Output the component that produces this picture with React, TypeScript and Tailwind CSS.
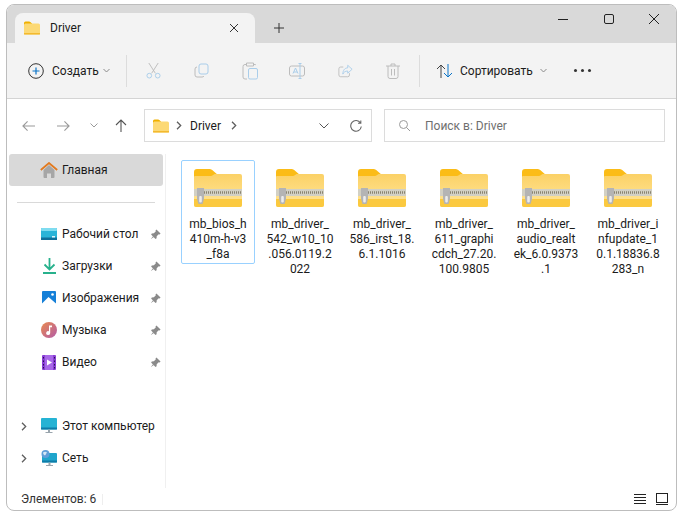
import React from 'react';

const FOLDERS = [
  { lines: ['mb_bios_h', '410m-h-v3', '_f8a'], selected: true },
  { lines: ['mb_driver_', '542_w10_10', '.056.0119.2', '022'] },
  { lines: ['mb_driver_', '586_irst_18.', '6.1.1016'] },
  { lines: ['mb_driver_', '611_graphi', 'cdch_27.20.', '100.9805'] },
  { lines: ['mb_driver_', 'audio_realt', 'ek_6.0.9373', '.1'] },
  { lines: ['mb_driver_i', 'nfupdate_1', '0.1.18836.8', '283_n'] },
];

const SmallFolder = () => (
  <svg width="16" height="14" viewBox="0 0 16 14" className="shrink-0">
    <path d="M0 2a1.500 1.500 0 0 1 1.500-1.500h3.600c.5 0 .9.2 1.200.5L8 2.500V6H0z" fill="#f0b000" />
    <path d="M0 4a1.500 1.500 0 0 1 1.500-1.500h13A1.500 1.500 0 0 1 16 4v8.500a1 1 0 0 1-1 1H1a1 1 0 0 1-1-1z" fill="#fcd975" />
    <rect x="0" y="12" width="16" height="1.500" fill="#f3b92f" />
  </svg>
);

const ZipFolder = () => (
  <svg width="48" height="38" viewBox="0 0 48 38" className="shrink-0">
    <defs>
      <linearGradient id="zipBody" x1="0" y1="0" x2="0" y2="1">
        <stop offset="0" stopColor="#fbd166" />
        <stop offset="0.7" stopColor="#ffe08a" />
        <stop offset="1" stopColor="#ffe08a" />
      </linearGradient>
    </defs>
    <path d="M0 3a3 3 0 0 1 3-3h12c1.500 0 2.800.5 3.800 1.500L24 6v6H0z" fill="#fbbc17" />
    <path d="M0 8a1 1 0 0 1 1-1h15c1.500 0 2.500-.4 3.500-1.200L20.500 5H46a2 2 0 0 1 2 2v29a2 2 0 0 1-2 2H2a2 2 0 0 1-2-2z" fill="url(#zipBody)" />
    <path d="M0 30h48v6a2 2 0 0 1-2 2H2a2 2 0 0 1-2-2z" fill="#fbc93f" />
    <rect x="0" y="20" width="48" height="7" fill="#d2d0c4" />
    <path d="M6 23.500h42" stroke="#8a8470" strokeWidth="2.500" strokeDasharray="1 1" />
    <path d="M3 19h7v11l-1.500 5h-4L3 30z" fill="#b4b4b4" />
    <rect x="5.200" y="27" width="2.600" height="6.500" rx="1" fill="#ececec" />
  </svg>
);

const Pin = () => (
  <svg width="11" height="11" viewBox="0 0 12 12" className="shrink-0 text-[#8a8a8a]">
    <path d="M7 .5 11.500 5 10.500 6 9.500 5.600 7.300 7.800 7.200 10 6 10.800 1.200 6 2 4.800 4.200 4.700 6.400 2.500 6 1.500z M3.200 8 .8 11.200 4 8.800z" fill="currentColor" />
  </svg>
);

const Chevron = () => (
  <svg width="6" height="9" viewBox="0 0 6 9" fill="none" stroke="#5f5f5f" strokeWidth="1.300" className="shrink-0">
    <path d="M1 .8l3.700 3.700L1 8.200" />
  </svg>
);

const SideItem = ({ icon, label, pin, chevron }: { icon: React.ReactNode; label: string; pin?: boolean; chevron?: boolean }) => (
  <div className="flex h-8 items-center">
    <div className="flex w-[34px] justify-center">{chevron && <Chevron />}</div>
    <div className="flex w-4 justify-center">{icon}</div>
    <span className="ml-[5px] w-[88px] whitespace-nowrap">{label}</span>
    {pin && <Pin />}
  </div>
);

const Desktop = (
  <svg width="16" height="13" viewBox="0 0 16 13">
    <rect width="16" height="12" rx="1" fill="#2ab4d8" />
    <rect width="16" height="3" rx="1" fill="#7fdcf0" />
    <rect y="9.500" width="16" height="2.500" fill="#0f6f9a" />
    <rect x="11" y="8" width="3" height="1.500" fill="#e0f4fa" />
  </svg>
);
const Downloads = (
  <svg width="13" height="16" viewBox="0 0 13 16" fill="none" stroke="#27b18c" strokeWidth="1.800">
    <path d="M6.500 0v11M1.500 6.500l5 5 5-5M0 15h13" />
  </svg>
);
const Pictures = (
  <svg width="14" height="15" viewBox="0 0 14 15">
    <rect width="14" height="15" rx="1" fill="#1680d8" />
    <path d="M0 12.500 6.500 6l7.500 6.500V15H0z" fill="#ffffff" />
    <circle cx="10.500" cy="3.500" r="1.300" fill="#ffffff" />
  </svg>
);
const Music = (
  <svg width="16" height="16" viewBox="0 0 16 16">
    <defs>
      <linearGradient id="musicGrad" x1="0" y1="0" x2="1" y2="1">
        <stop offset="0" stopColor="#e98a4e" />
        <stop offset="1" stopColor="#b45ca8" />
      </linearGradient>
    </defs>
    <circle cx="8" cy="8" r="8" fill="url(#musicGrad)" />
    <path d="M8 3.500h3v1.800H9.200V11a2 2 0 1 1-1.200-1.800z" fill="#ffffff" />
  </svg>
);
const Video = (
  <svg width="14" height="15" viewBox="0 0 14 15">
    <rect width="14" height="15" rx="1" fill="#8a3fd6" />
    <rect x="3" y="0" width="8" height="15" fill="#a868e8" />
    <path d="M5 4.500l5 3-5 3z" fill="#ffffff" />
    <path d="M1 2h1v1.500H1zM1 5.500h1V7H1zM1 9h1v1.500H1zM1 12h1v1.500H1zM12 2h1v1.500h-1zM12 5.500h1V7h-1zM12 9h1v1.500h-1zM12 12h1v1.500h-1z" fill="#2a1055" />
  </svg>
);
const Computer = (
  <svg width="16" height="16" viewBox="0 0 16 16">
    <rect width="16" height="11.500" rx="1" fill="#25b3d4" />
    <rect y="9.500" width="16" height="2" fill="#0e7ca8" />
    <path d="M7 11.500h2V14H7zM4.500 14h7v1h-7z" fill="#9aa5ad" />
  </svg>
);
const Network = (
  <svg width="16" height="16" viewBox="0 0 16 16">
    <rect x="1" y="3" width="15" height="9.500" rx="1" fill="#1fa5cc" />
    <rect x="1" y="10.500" width="15" height="2" fill="#0e7ca8" />
    <path d="M7.500 12.500h2V15h-2zM5 15h7v1H5z" fill="#9aa5ad" />
    <circle cx="4.500" cy="4" r="4" fill="#5f9ed8" />
    <path d="M2 2.500c1.500-1 3-1 4 0-1 1-1 2-2 3-1-.5-2-1.500-2-3z" fill="#d5e6f5" />
  </svg>
);

const Home = (
  <svg width="18" height="16" viewBox="0 0 18 16" className="shrink-0">
    <path d="M3.500 8 9 3l5.500 5v7a1 1 0 0 1-1 1H11v-4.500H7V16H4.500a1 1 0 0 1-1-1z" fill="#a6a6a6" />
    <path d="M.8 8 9 1l8.200 7" fill="none" stroke="#e27a1f" strokeWidth="1.800" />
  </svg>
);

export default function App() {
  return (
    <div className="h-[517px] w-[684px] overflow-hidden bg-white pl-[6px] pt-1 text-xs text-[#1b1b1b] [font-family:Roboto,sans-serif]">
      <div className="flex h-[507px] w-[671px] flex-col overflow-hidden rounded-lg border border-[#bdbdbd] bg-white">
        {/* tab strip */}
        <div className="flex h-[38px] shrink-0 items-end bg-[#d9d9d9] pl-2">
          <div className="flex h-[30px] w-[240px] items-center rounded-t-lg bg-[#f3f3f3] pl-[9px]">
            <SmallFolder />
            <span className="ml-[10px]">Driver</span>
            <svg width="10" height="10" viewBox="0 0 10 10" className="ml-auto mr-4" fill="none" stroke="#333" strokeWidth="1">
              <path d="M1 1l8 8M9 1l-8 8" />
            </svg>
          </div>
          <svg width="10" height="10" viewBox="0 0 10 10" className="mb-[10px] ml-[19px]" fill="none" stroke="#333" strokeWidth="1">
            <path d="M5 0v10M0 5h10" />
          </svg>
          <div className="mb-[19px] ml-auto flex items-center">
            <div className="h-px w-[10px] bg-[#222]" />
            <div className="ml-9 h-[10px] w-[10px] rounded-[2px] border border-[#222]" />
            <svg width="10" height="10" viewBox="0 0 10 10" className="ml-[35px] mr-[17px]" fill="none" stroke="#222" strokeWidth="1">
              <path d="M0 0l10 10M10 0L0 10" />
            </svg>
          </div>
        </div>

        {/* toolbar */}
        <div className="flex h-[56px] shrink-0 items-center border-b border-[#d4d4d4] bg-[#f3f3f3] pl-[21px]">
          <svg width="16" height="16" viewBox="0 0 16 16" fill="none">
            <circle cx="8" cy="8" r="7.300" stroke="#333" />
            <path d="M8 4.500v7M4.500 8h7" stroke="#0a74c8" strokeWidth="1.200" />
          </svg>
          <span className="ml-2 w-[44px] whitespace-nowrap">Создать</span>
          <svg width="7" height="5" viewBox="0 0 7 5" className="ml-[7px]" fill="none" stroke="#8a8a8a">
            <path d="M.5 1l3 3 3-3" />
          </svg>
          <div className="ml-4 h-[32px] w-px bg-[#dcdcdc]" />
          <svg width="15" height="17" viewBox="0 0 16 18" className="ml-[19px]" fill="none" stroke="#bcbcbc">
            <path d="M3 1l7 11M13 1L6 12" />
            <circle cx="3.500" cy="14.500" r="2.500" stroke="#a9cdea" />
            <circle cx="12.500" cy="14.500" r="2.500" stroke="#a9cdea" />
          </svg>
          <svg width="15" height="15" viewBox="0 0 15 15" className="ml-[33px]" fill="none">
            <rect x="5" y="1" width="9" height="10" rx="2" stroke="#a9cdea" />
            <path d="M3 4a2 2 0 0 0-2 2v6a2 2 0 0 0 2 2h5a2 2 0 0 0 2-1" stroke="#bcbcbc" />
          </svg>
          <svg width="16" height="18" viewBox="0 0 16 18" className="ml-[33px]" fill="none">
            <path d="M5 2.500H3a2 2 0 0 0-2 2V15a2 2 0 0 0 2 2h2M11 2.500h2a2 2 0 0 1 1 .5M4.500 1h7v3h-7z" stroke="#bcbcbc" />
            <rect x="6.500" y="6.500" width="9" height="10.500" rx="1.500" stroke="#a9cdea" />
          </svg>
          <svg width="16" height="16" viewBox="0 0 16 16" className="ml-[31px]" fill="none">
            <rect x=".5" y="3" width="15" height="10" rx="2" stroke="#bcbcbc" />
            <path d="M4 10.500 6.500 5 9 10.500M5 9h3" stroke="#a9cdea" />
            <path d="M11 .5v15M9.500.5h3M9.500 15.500h3" stroke="#a9cdea" />
          </svg>
          <svg width="15" height="14" viewBox="0 0 17 15" className="ml-[33px]" fill="none">
            <path d="M6 3H3a2 2 0 0 0-2 2v7a2 2 0 0 0 2 2h8a2 2 0 0 0 2-2v-2" stroke="#bcbcbc" />
            <path d="M11 1l5 4.500L11 10V7.500C8 7.500 6.500 9 5.500 11c0-4 2-7 5.500-7z" stroke="#a9cdea" />
          </svg>
          <svg width="14" height="16" viewBox="0 0 14 16" className="ml-[33px]" fill="none" stroke="#bcbcbc">
            <path d="M0 3h14M5 3V1h4v2M2 3v10.500a2 2 0 0 0 2 2h6a2 2 0 0 0 2-2V3M5.500 6v6.500M8.500 6v6.500" />
          </svg>
          <div className="ml-[19px] h-[32px] w-px bg-[#dcdcdc]" />
          <svg width="17" height="14" viewBox="0 0 17 14" className="ml-4" fill="none">
            <path d="M5 14V1M1 5l4-4 4 4" stroke="#444" />
            <path d="M12 0v13M8 9l4 4 4-4" stroke="#0a74c8" />
          </svg>
          <span className="ml-[7px] w-[73px] whitespace-nowrap">Сортировать</span>
          <svg width="7" height="5" viewBox="0 0 7 5" className="ml-[7px]" fill="none" stroke="#8a8a8a">
            <path d="M.5 1l3 3 3-3" />
          </svg>
          <div className="ml-[27px] flex gap-1">
            <div className="h-[3px] w-[3px] rounded-full bg-[#333]" />
            <div className="h-[3px] w-[3px] rounded-full bg-[#333]" />
            <div className="h-[3px] w-[3px] rounded-full bg-[#333]" />
          </div>
        </div>

        {/* address row */}
        <div className="flex h-[55px] shrink-0 items-start pl-[14px] pt-[10px]">
          <div className="flex h-[33px] w-[123px] items-center">
            <svg width="13" height="12" viewBox="0 0 14 12" className="ml-px" fill="none" stroke="#9a9a9a" strokeWidth="1.200">
              <path d="M14 6H1M6 1 1 6l5 5" />
            </svg>
            <svg width="13" height="12" viewBox="0 0 14 12" className="ml-[22px]" fill="none" stroke="#9a9a9a" strokeWidth="1.200">
              <path d="M0 6h13M8 1l5 5-5 5" />
            </svg>
            <svg width="8" height="5" viewBox="0 0 8 5" className="ml-5" fill="none" stroke="#9a9a9a">
              <path d="M.5.5 4 4 7.500.5" />
            </svg>
            <svg width="12" height="13" viewBox="0 0 12 13" className="ml-[17px]" fill="none" stroke="#555" strokeWidth="1.100">
              <path d="M6 13V1M1 6l5-5 5 5" />
            </svg>
          </div>
          <div className="flex h-[33px] w-[228px] items-center border border-[#dcdcdc] bg-white pl-[8px]">
            <SmallFolder />
            <div className="ml-[7px]"><Chevron /></div>
            <span className="ml-[8px] w-[33px]">Driver</span>
            <div className="ml-[8px]"><Chevron /></div>
            <svg width="10" height="6" viewBox="0 0 10 6" className="ml-[82px]" fill="none" stroke="#555">
              <path d="M.5.5 5 5 9.500.5" />
            </svg>
            <svg width="12" height="12" viewBox="0 0 12 12" className="ml-[21px]" fill="none" stroke="#666" strokeWidth="1.100">
              <path d="M10.500 3A5.300 5.300 0 1 0 11.300 6.500M10.800.5V3.300H8" />
            </svg>
          </div>
          <div className="ml-3 flex h-[33px] w-[281px] items-center border border-[#dcdcdc] bg-white pl-[14px] text-[#6f6f6f]">
            <svg width="11" height="11" viewBox="0 0 11 11" fill="none" stroke="#9a9a9a">
              <circle cx="4.500" cy="4.500" r="4" />
              <path d="M7.500 7.500l3.500 3.500" />
            </svg>
            <span className="ml-[15px]">Поиск в: Driver</span>
          </div>
        </div>

        {/* body */}
        <div className="flex min-h-0 flex-1">
          <div className="w-[159px] shrink-0 border-r border-[#f0f0f0]">
            <div className="ml-[2px] flex h-8 w-[154px] items-center rounded-[3px] bg-[#d9d9d9]">
              <div className="ml-[32px] flex w-4 justify-center">{Home}</div>
              <span className="ml-[5px]">Главная</span>
            </div>
            <div className="ml-[10px] mt-4 h-px w-[138px] bg-[#d9d9d9]" />
            <div className="mt-[15px]">
              <SideItem icon={Desktop} label="Рабочий стол" pin />
              <SideItem icon={Downloads} label="Загрузки" pin />
              <SideItem icon={Pictures} label="Изображения" pin />
              <SideItem icon={Music} label="Музыка" pin />
              <SideItem icon={Video} label="Видео" pin />
            </div>
            <div className="mt-8">
              <SideItem icon={Computer} label="Этот компьютер" chevron />
              <SideItem icon={Network} label="Сеть" chevron />
            </div>
          </div>
          <div className="flex flex-1 items-start gap-2 pl-[15px] pt-[6px]">
            {FOLDERS.map((folder) => (
              <div
                key={folder.lines[0] + folder.lines[1]}
                className={`flex h-[104px] w-[74px] shrink-0 flex-col items-center rounded-[2px] border pt-2 ${
                  folder.selected ? 'border-[#99d1ff]' : 'border-transparent'
                }`}
              >
                <ZipFolder />
                <div className="mt-[10px] text-center leading-[15px] whitespace-nowrap">
                  {folder.lines.map((line) => (
                    <div key={line}>{line}</div>
                  ))}
                </div>
              </div>
            ))}
          </div>
        </div>

        {/* status bar */}
        <div className="flex h-[22px] shrink-0 items-center pl-[14px]">
          <span className="w-[71px] whitespace-nowrap text-[#333]">Элементов: 6</span>
          <div className="ml-[10px] h-[11px] w-px bg-[#eeeeee]" />
          <div className="ml-auto mr-2 flex items-center gap-[9px]">
            <svg width="14" height="12" viewBox="0 0 14 12" fill="none" stroke="#222">
              <path d="M1 1.500h12M1 4.500h12M1 7.500h12M1 10.500h12" />
            </svg>
            <svg width="12" height="12" viewBox="0 0 12 12" fill="none" stroke="#222">
              <rect x=".5" y=".5" width="11" height="9" />
              <path d="M0 11.500h12" />
            </svg>
          </div>
        </div>
      </div>
    </div>
  );
}
